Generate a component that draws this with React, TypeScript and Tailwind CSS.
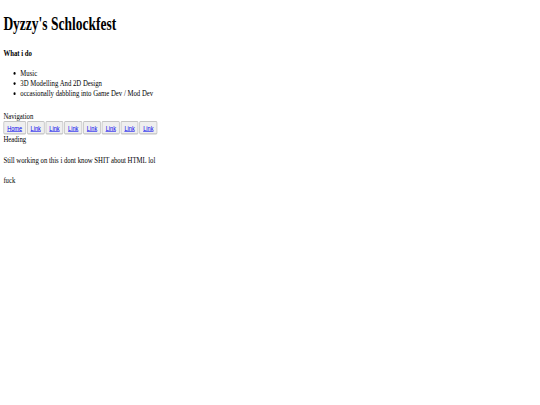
const links = ['Home', 'Link', 'Link', 'Link', 'Link', 'Link', 'Link', 'Link'];

export default function App() {
  return (
    <div className="w-[540px] h-[405px] overflow-hidden bg-white">
      {/* page drawn at 1280x720, squeezed into the 540x405 frame */}
      <div className="w-[1280px] h-[720px] p-2 origin-top-left scale-x-[0.421875] scale-y-[0.5625] text-black text-[16px] leading-[normal] font-['Liberation_Serif',serif]">
        <h1 className="mt-[16px] text-[32px] font-bold leading-[normal]">Dyzzy's Schlockfest</h1>

        <h4 className="mt-[24px] font-bold">What i do</h4>

        <ul className="mt-[18px] pl-[40px] list-disc">
          <li>Music</li>
          <li>3D Modelling And 2D Design</li>
          <li>occasionally dabbling into Game Dev / Mod Dev</li>
        </ul>

        <nav className="mt-[22px]">
          <div>Navigation</div>
          <div className="flex gap-[2px]">
            {links.map((label, i) => (
              <button
                key={i}
                className="h-[24px] px-[7px] border-2 border-[#c4c4c4] rounded-[3px] bg-[#efefef] text-[13.33px] leading-[normal] font-['Liberation_Sans',sans-serif]"
              >
                <a href="#" className="text-[#0000ee] underline">
                  {label}
                </a>
              </button>
            ))}
          </div>
        </nav>

        <div>Heading</div>
        <p className="mt-[19px]">Still working on this i dont know SHIT about HTML lol</p>
        <p className="mt-[18px]">fuck</p>
      </div>
    </div>
  );
}
